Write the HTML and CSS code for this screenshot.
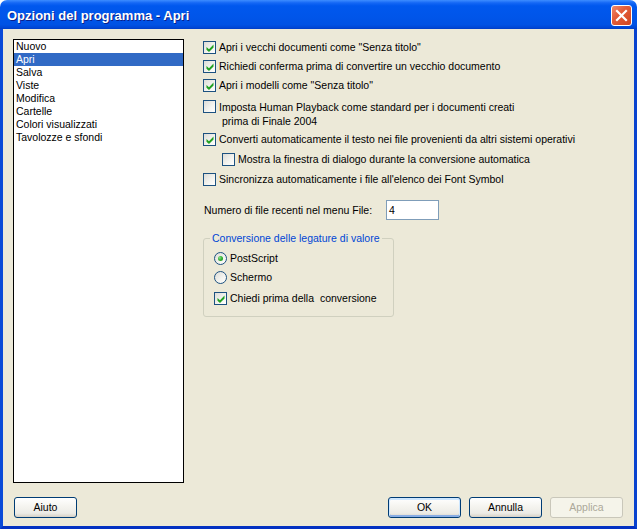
FILE: index.html
```html
<!DOCTYPE html>
<html lang="it">
<head>
<meta charset="utf-8">
<title>Opzioni del programma - Apri</title>
<link rel="stylesheet" href="styles.css">
</head>
<body>
<div class="window">
  <div class="titlebar">
    <span class="title">Opzioni del programma - Apri</span>
    <span class="close">
      <svg width="13" height="13" viewBox="0 0 13 13"><path d="M2 2 L11 11 M11 2 L2 11" stroke="#fff" stroke-width="2.2" stroke-linecap="square"/></svg>
    </span>
  </div>
  <div class="client">
    <div class="main">
      <div class="listbox">
        <div class="item">Nuovo</div>
        <div class="item sel">Apri</div>
        <div class="item">Salva</div>
        <div class="item">Viste</div>
        <div class="item">Modifica</div>
        <div class="item">Cartelle</div>
        <div class="item">Colori visualizzati</div>
        <div class="item">Tavolozze e sfondi</div>
      </div>
      <div class="panel">
        <div class="row r1"><span class="cb on"></span><span class="lbl">Apri i vecchi documenti come "Senza titolo"</span></div>
        <div class="row r2"><span class="cb on"></span><span class="lbl">Richiedi conferma prima di convertire un vecchio documento</span></div>
        <div class="row r3"><span class="cb on"></span><span class="lbl">Apri i modelli come "Senza titolo"</span></div>
        <div class="row r4"><span class="cb"></span><span class="lbl two"><span class="l1">Imposta Human Playback come standard per i documenti creati</span><span class="l2">prima di Finale 2004</span></span></div>
        <div class="row r5"><span class="cb on"></span><span class="lbl">Converti automaticamente il testo nei file provenienti da altri sistemi operativi</span></div>
        <div class="row r6"><span class="cb"></span><span class="lbl">Mostra la finestra di dialogo durante la conversione automatica</span></div>
        <div class="row r7"><span class="cb"></span><span class="lbl">Sincronizza automaticamente i file all'elenco dei Font Symbol</span></div>
        <div class="numrow"><span class="numlbl">Numero di file recenti nel menu File:</span><span class="input">4</span></div>
        <div class="group">
          <span class="gtitle">Conversione delle legature di valore</span>
          <div class="row g1"><span class="rb on"></span><span class="lbl">PostScript</span></div>
          <div class="row g2"><span class="rb"></span><span class="lbl">Schermo</span></div>
          <div class="row g3"><span class="cb on"></span><span class="lbl">Chiedi prima della&nbsp; conversione</span></div>
        </div>
      </div>
    </div>
    <div class="footer">
      <div class="btn help">Aiuto</div>
      <div class="btns">
        <div class="btn default">OK</div>
        <div class="btn">Annulla</div>
        <div class="btn disabled">Applica</div>
      </div>
    </div>
  </div>
</div>
</body>
</html>
```
FILE: styles.css
```css
html, body {
  margin: 0;
  padding: 0;
  background: #ffffff;
}
body {
  font-family: "Liberation Sans", Arial, sans-serif;
  font-size: 10.5px;
  color: #000;
}
.window {
  width: 637px;
  height: 529px;
  display: flex;
  flex-direction: column;
  border-radius: 7px 7px 0 0;
  overflow: hidden;
}
.titlebar {
  height: 29px;
  flex: none;
  display: flex;
  align-items: center;
  justify-content: space-between;
  padding: 0 5px 0 7px;
  box-sizing: border-box;
  background: linear-gradient(to bottom, #3d8dff 0%, #1467f5 10%, #0058ee 20%, #0055e9 60%, #0052e4 85%, #0047d6 95%, #003dc4 100%);
}
.title {
  color: #fff;
  font-weight: bold;
  font-size: 13px;
  text-shadow: 1px 1px 0 #0b1f8a;
  line-height: 15px;
  padding-top: 1px;
}
.close {
  width: 21px;
  height: 21px;
  box-sizing: border-box;
  border: 1px solid #fff;
  border-radius: 3px;
  background: linear-gradient(135deg, #f08a6c 0%, #e35d3a 40%, #d14620 100%);
  display: flex;
  align-items: center;
  justify-content: center;
  margin-top: 1px;
}
.client {
  flex: 1;
  display: flex;
  flex-direction: column;
  background: #ece9d8;
  border-left: 3px solid #0a4ad8;
  border-right: 3px solid #0842cf;
  border-bottom: 3px solid #0331c2;
  padding: 10px 11px 8px 10px;
  min-height: 0;
}
.main {
  flex: 1;
  display: flex;
  gap: 19px;
  min-height: 0;
}
.listbox {
  width: 171px;
  box-sizing: border-box;
  border: 1px solid #000;
  background: #fff;
  flex: none;
}
.item {
  height: 13px;
  line-height: 13px;
  padding-left: 2px;
  white-space: nowrap;
}
.item.sel {
  background: #316ac5;
  color: #fff;
}
.panel {
  flex: 1;
  display: flex;
  flex-direction: column;
  align-items: flex-start;
}
.row {
  display: flex;
  align-items: flex-start;
  gap: 3px;
  line-height: 13px;
  white-space: nowrap;
}
.r1 { margin-top: 2px; }
.r2 { margin-top: 6px; }
.r3 { margin-top: 6px; }
.r4 { margin-top: 8px; }
.r5 { margin-top: 5px; }
.r6 { margin-top: 7px; margin-left: 19px; }
.r7 { margin-top: 7px; }
.lbl.two {
  display: flex;
  flex-direction: column;
  line-height: 14px;
}
.lbl.two .l2 {
  padding-left: 3px;
}
.cb {
  width: 13px;
  height: 13px;
  box-sizing: border-box;
  border: 1px solid #1c5180;
  background: linear-gradient(135deg, #dcdcd7 0%, #f4f4f0 60%, #ffffff 100%);
  position: relative;
  flex: none;
}
.cb.on::after {
  content: "";
  position: absolute;
  left: 2px;
  top: 2px;
  width: 8px;
  height: 8px;
  background: #21a121;
  clip-path: polygon(6% 37.5%, 37.5% 65%, 94% 6%, 94% 44%, 37.5% 100%, 6% 72%);
}
.rb {
  width: 13px;
  height: 13px;
  box-sizing: border-box;
  border: 1px solid #1c5180;
  border-radius: 50%;
  background: linear-gradient(135deg, #dcdcd7 0%, #f4f4f0 60%, #ffffff 100%);
  position: relative;
  flex: none;
}
.rb.on::after {
  content: "";
  position: absolute;
  left: 3px;
  top: 3px;
  width: 5px;
  height: 5px;
  border-radius: 50%;
  background: radial-gradient(circle at 35% 35%, #8ee08e 0%, #2fb12f 50%, #178a17 100%);
}
.numrow {
  margin-top: 14px;
  height: 20px;
  display: flex;
  align-items: center;
  width: 236px;
  justify-content: space-between;
  padding-left: 1px;
  box-sizing: border-box;
}
.input {
  width: 53px;
  height: 20px;
  box-sizing: border-box;
  border: 1px solid #7f9db9;
  background: #fff;
  padding-left: 2px;
  line-height: 18px;
}
.group {
  position: relative;
  margin-top: 18px;
  width: 191px;
  box-sizing: border-box;
  border: 1px solid #d0d0bf;
  border-radius: 3px;
  padding: 13px 0 11px 10px;
  display: flex;
  flex-direction: column;
}
.gtitle {
  position: absolute;
  top: -7px;
  left: 6px;
  padding: 0 2px;
  background: #ece9d8;
  color: #0046d5;
  line-height: 13px;
  white-space: nowrap;
}
.g2 { margin-top: 6px; }
.g3 { margin-top: 8px; }
.footer {
  flex: none;
  height: 21px;
  margin-top: 14px;
  display: flex;
  justify-content: space-between;
}
.btns {
  display: flex;
  gap: 8px;
}
.btn {
  width: 73px;
  height: 21px;
  box-sizing: border-box;
  border: 1px solid #003c74;
  border-radius: 3px;
  background: linear-gradient(to bottom, #ffffff 0%, #f6f5f1 40%, #ecebe6 80%, #d6d0c5 100%);
  display: flex;
  align-items: center;
  justify-content: center;
  line-height: 13px;
}
.btn.help {
  width: 63px;
  margin-left: 1px;
}
.btn.default {
  box-shadow: inset 0 1px 0 1px #cee7ff, inset 0 -1px 0 1px #89ade4;
}
.btn.disabled {
  border-color: #c9c7ba;
  background: #f5f4ea;
  color: #aca899;
}
```
